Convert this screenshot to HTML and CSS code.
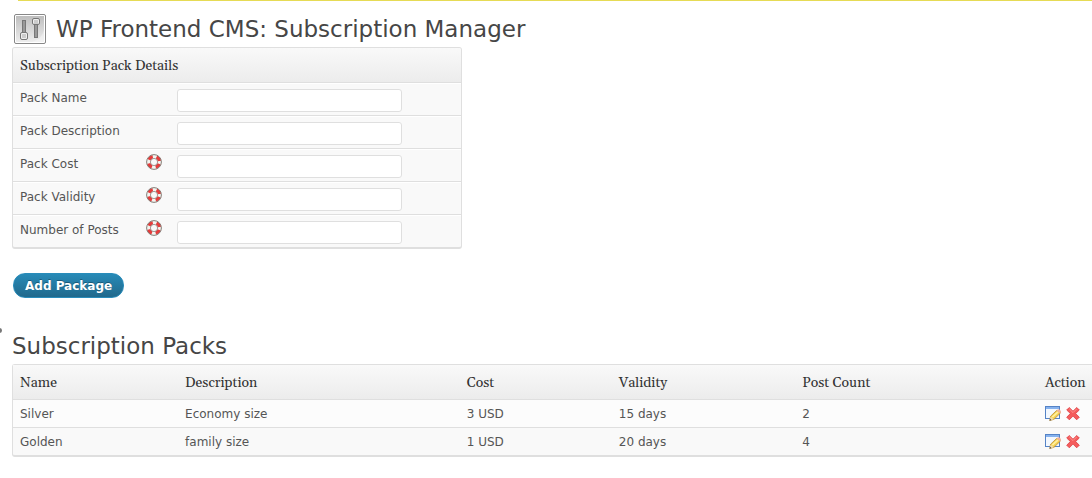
FILE: index.html
```
<!DOCTYPE html>
<html lang="en">
<head>
<meta charset="utf-8">
<title>WP Frontend CMS: Subscription Manager</title>
<link rel="stylesheet" href="styles.css">
</head>
<body>
<svg class="symbols" aria-hidden="true">
  <defs>
    <linearGradient id="plate" x1="0" y1="0" x2="0" y2="1"><stop offset="0" stop-color="#bebebe"/><stop offset="1" stop-color="#ededed"/></linearGradient>
    <symbol id="help" viewBox="0 0 16 16">
      <circle cx="8" cy="8" r="5.4" fill="none" stroke="#f4f4f0" stroke-width="4"/>
      <circle cx="8" cy="8" r="5.5" fill="none" stroke="#e63c3c" stroke-width="3.4" stroke-dasharray="4.7 3.939" stroke-dashoffset="-1.97"/>
      <circle cx="8" cy="8" r="7.4" fill="none" stroke="#77706a" stroke-width=".9"/>
      <circle cx="8" cy="8" r="3.6" fill="none" stroke="#8a7d78" stroke-width=".8"/>
    </symbol>
    <symbol id="edit" viewBox="0 0 16 16">
      <rect x=".5" y=".5" width="14" height="12" fill="#f3f8fe" stroke="#5583c6"/>
      <path d="M1 1h13v2H1z" fill="#86b2ee"/>
      <path d="M4.800 14.500l.8-4.300 6-5.700q2.400-.4 3.800 2.600L9 13.300z" fill="#f5cf4e" stroke="#b98c35" stroke-width=".8"/>
      <path d="M7.300 11.200l5.800-5.400" stroke="#fff0a0" stroke-width="1.600"/>
      <path d="M11.600 4.500l1-1q1.400-.6 2.600.7t.8 2.200l-.9 1z" fill="#efb19b"/>
      <path d="M4.800 14.500l.8-3.700L8.800 13.200z" fill="#f2dfba"/>
      <path d="M4.500 14.800l.6-2 1.400 1.200z" fill="#55483c"/>
    </symbol>
    <symbol id="delete" viewBox="0 0 16 16">
      <path d="M4.200 1.500L8 5.200 11.800 1.500 14.300 4 10.600 7.500l3.700 3.700-2.600 2.600L8 10.100l-3.700 3.700-2.600-2.600 3.700-3.700L1.700 4z" fill="#f45c5c" stroke="#dd3b40" stroke-width=".8" stroke-linejoin="round"/>
      <path d="M4.200 2.800L8 6.600l3.800-3.800" fill="none" stroke="#ff918c"/>
    </symbol>
  </defs>
</svg>
<div class="notice-edge"></div>
<main class="wrap">
  <header class="page-head">
    <svg class="page-icon" viewBox="0 0 32 32" aria-hidden="true">
      <rect x=".5" y="1.500" width="31" height="29" rx="1.500" fill="#fff" stroke="#888"/>
      <path d="M2 3h28v26H2z" fill="url(#plate)"/>
      <path d="M18 29Q28 26 30 17v12z" fill="#fff" opacity=".35"/>
      <rect x="8.500" y="7.500" width="3" height="13" fill="#999" stroke="#777"/>
      <rect x="6.500" y="19.500" width="7" height="7" rx="1.500" fill="#eee" stroke="#777"/>
      <path d="M8 22h4M8 24h4" stroke="#aaa"/>
      <rect x="20.500" y="11.500" width="3" height="13" fill="#999" stroke="#777"/>
      <rect x="18.500" y="5.500" width="7" height="6" rx="1.500" fill="#eee" stroke="#777"/>
      <path d="M20 8h4M20 10h4" stroke="#aaa"/>
    </svg>
    <h1 class="title">WP Frontend CMS: Subscription Manager</h1>
  </header>
  <form class="pack-form">
    <section class="panel">
      <h2 class="panel-head">Subscription Pack Details</h2>
      <div class="field"><label for="name">Pack Name</label><span></span><input id="name" type="text"></div>
      <div class="field"><label for="desc">Pack Description</label><span></span><input id="desc" type="text"></div>
      <div class="field"><label for="cost">Pack Cost</label><svg class="icon"><use href="#help"/></svg><input id="cost" type="text"></div>
      <div class="field"><label for="validity">Pack Validity</label><svg class="icon"><use href="#help"/></svg><input id="validity" type="text"></div>
      <div class="field"><label for="posts">Number of Posts</label><svg class="icon"><use href="#help"/></svg><input id="posts" type="text"></div>
    </section>
    <button class="submit" type="button">Add Package</button>
  </form>
  <h2 class="title">Subscription Packs</h2>
  <table class="packs">
    <colgroup><col class="c-name"><col class="c-desc"><col class="c-cost"><col class="c-valid"><col class="c-count"><col></colgroup>
    <thead><tr><th>Name</th><th>Description</th><th>Cost</th><th>Validity</th><th>Post Count</th><th>Action</th></tr></thead>
    <tbody>
      <tr><td>Silver</td><td>Economy size</td><td>3 USD</td><td>15 days</td><td>2</td><td><div class="actions"><a href="#edit-silver" aria-label="Edit Silver"><svg class="icon"><use href="#edit"/></svg></a><a href="#delete-silver" aria-label="Delete Silver"><svg class="icon"><use href="#delete"/></svg></a></div></td></tr>
      <tr><td>Golden</td><td>family size</td><td>1 USD</td><td>20 days</td><td>4</td><td><div class="actions"><a href="#edit-golden" aria-label="Edit Golden"><svg class="icon"><use href="#edit"/></svg></a><a href="#delete-golden" aria-label="Delete Golden"><svg class="icon"><use href="#delete"/></svg></a></div></td></tr>
    </tbody>
  </table>
</main>
<span class="menu-dot"></span>
</body>
</html>
```
FILE: styles.css
```
* { box-sizing: border-box; }
body { margin: 0; position: relative; background: #fff; color: #555; font: 12px/18px "DejaVu Sans", sans-serif; }
.symbols { position: absolute; width: 0; height: 0; }
.notice-edge { height: 1px; margin-left: 18px; background: #e6db55; }
.wrap { padding: 12px 0 20px 12px; }
.page-head { display: flex; align-items: center; gap: 10px; height: 34px; padding: 0 0 2px 2px; }
.page-icon { width: 32px; height: 32px; flex: none; }
.title { margin: 0; color: #464646; font-size: 23px; line-height: 36px; font-weight: 400; }
.panel { max-width: 450px; border: 1px solid #dfdfdf; border-bottom-width: 2px; border-radius: 3px; background: #f9f9f9; overflow: hidden; }
.panel-head { margin: 0; padding: 9px 7px 7px; height: 35px; border-bottom: 1px solid #dfdfdf; background: linear-gradient(#f9f9f9, #ececec); color: #333; font: 400 14px/18px Georgia, Gelasio, "Liberation Serif", serif; }
.field { display: grid; grid-template-columns: 126px 31px minmax(0, 225px); align-items: start; height: 33px; padding: 4px 7px; border-top: 1px solid #fff; border-bottom: 1px solid #dfdfdf; }
.field:last-child { height: 32px; border-bottom: 0; }
.field label { padding-top: 1px; }
.field input { width: 100%; height: 23px; margin: 1px 0 0; padding: 2px 4px; border: 1px solid #dfdfdf; border-radius: 3px; background: #fff; color: #333; font: inherit; }
.icon { display: block; width: 16px; height: 16px; }
.submit { display: block; height: 25px; margin: 24px 0 30px 1px; padding: 0 11px; border: 1px solid #298cba; border-radius: 12px; background: linear-gradient(#278ab7, #21698c); color: #fff; font: 700 12px/22px "DejaVu Sans", sans-serif; text-shadow: 0 -1px 0 rgba(0, 0, 0, .3); }
.packs { width: 100%; table-layout: fixed; border: 1px solid #dfdfdf; border-right: 0; border-bottom-width: 2px; border-radius: 3px 0 0 3px; border-spacing: 0; background: #f9f9f9; }
.packs th { height: 35px; padding: 2px 7px 0; border-bottom: 1px solid #dfdfdf; background: linear-gradient(#f9f9f9, #ececec); color: #333; text-align: left; font: 400 14px/18px Georgia, Gelasio, "Liberation Serif", serif; white-space: nowrap; }
.packs td { height: 28px; padding: 0 7px; border-bottom: 1px solid #dfdfdf; }
.packs tr:first-child td { background: #fcfcfc; }
.packs tr:last-child td { height: 27px; border-bottom: 0; }
.c-name { width: 15.3%; }
.c-desc { width: 26.1%; }
.c-cost { width: 14.1%; }
.c-valid { width: 17%; }
.c-count { width: 22.5%; }
.actions { display: flex; gap: 4px; }
.menu-dot { position: absolute; left: -3px; top: 328px; width: 5px; height: 5px; border-radius: 50%; background: #777; }
```
